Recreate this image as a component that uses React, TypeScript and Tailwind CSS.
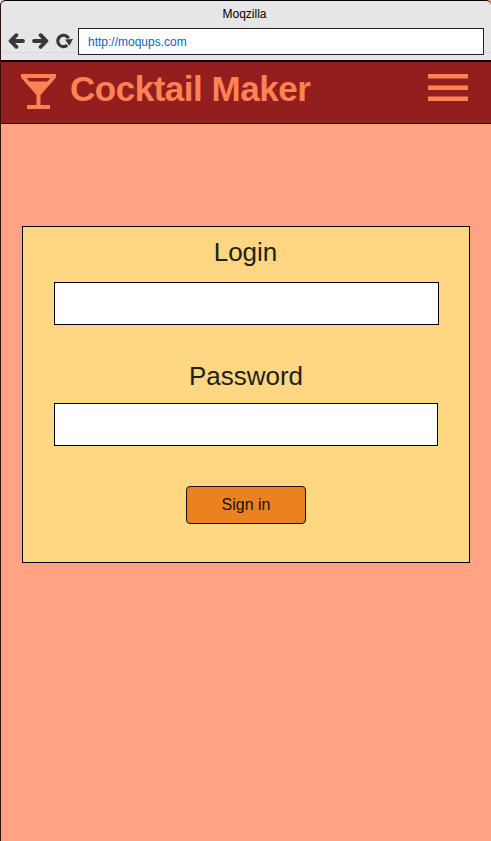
function ArrowLeft() {
  return (
    <svg className="block h-4 w-[17px]" viewBox="0 0 17 16" fill="none" stroke="#383838" strokeWidth="3.8">
      <path d="M8.4 2.2L2.6 8L8.4 13.8M3 8H15" strokeLinejoin="round" strokeLinecap="round" />
    </svg>
  );
}

function ArrowRight() {
  return (
    <svg className="block h-4 w-[17px]" viewBox="0 0 17 16" fill="none" stroke="#383838" strokeWidth="3.8">
      <path d="M8.6 2.2L14.4 8L8.6 13.8M14 8H2" strokeLinejoin="round" strokeLinecap="round" />
    </svg>
  );
}

function Reload() {
  return (
    <svg className="block h-4 w-[17px]" viewBox="0 0 17 16">
      <path d="M11.3 12.2A5.7 5.7 0 1 1 12.6 5.4" fill="none" stroke="#383838" strokeWidth="3.1" />
      <path d="M9 6.6L17 6L13.4 12.8Z" fill="#383838" />
    </svg>
  );
}

function Martini() {
  return (
    <svg className="block h-[35px] w-[35px]" viewBox="0 0 35 35" fill="#ff8254">
      <path fillRule="evenodd" d="M0 0H35V3.4L19.5 21V31H29V35H6V31H15.5V21L0 3.4ZM5.5 4L8.5 7.6H26.5L29.5 4Z" />
    </svg>
  );
}

function Hamburger() {
  return (
    <svg className="block h-[27px] w-10" viewBox="0 0 40 27" fill="#ff8254">
      <path d="M0 0H40V4.6H0ZM0 11.4H40V16H0ZM0 22.4H40V27H0Z" />
    </svg>
  );
}

function BrowserBar() {
  return (
    <div className="h-[62px] rounded-t-[5px] border-b-2 border-t border-black bg-[#e6e6e6]">
      <div className="h-[27px] pr-[3px] text-center text-xs leading-[26px] text-black">Moqzilla</div>
      <div className="flex h-[27px] items-start bg-[linear-gradient(#d8d8d8,#d8d8d8)] bg-[length:100%_1px] bg-[position:0_24px] bg-no-repeat pl-[7px] pr-[7px]">
        <div className="flex w-[70px] gap-[7px] pt-[5px]">
          <ArrowLeft />
          <ArrowRight />
          <Reload />
        </div>
        <div className="h-[27px] flex-1 border border-[#222] bg-white pl-[9px] text-xs leading-[26px] text-[#1762b8]">
          http://moqups.com
        </div>
      </div>
    </div>
  );
}

export default function App() {
  return (
    <div className="h-[841px] w-[491px] overflow-hidden rounded-tl-[5px] border-l border-[#30100c] bg-[#ffa384] font-['Liberation_Sans',Arial,sans-serif]">
      <BrowserBar />
      <header className="flex h-[62px] items-start justify-between border-b border-[#220505] bg-[#921e1e] pl-5 pr-[23px] pt-3">
        <div className="flex gap-[14px]">
          <Martini />
          <h1 className="mt-[-5px] whitespace-nowrap text-[35px] font-bold leading-10 tracking-[-0.48px] text-[#ff8254]">Cocktail Maker</h1>
        </div>
        <Hamburger />
      </header>
      <form className="ml-[21px] mt-[102px] flex h-[337px] w-[448px] flex-col border border-black bg-[#ffd782] pl-[31px]">
        <label htmlFor="login" className="mt-[10px] h-[45px] w-[383px] text-center text-[26px] leading-[30px] text-[#221f1a]">Login</label>
        <input id="login" className="h-[43px] w-[385px] border border-black bg-white px-3 outline-none" />
        <label htmlFor="password" className="mt-[36px] h-[42px] w-[384px] text-center text-[26px] leading-[30px] text-[#221f1a]">Password</label>
        <input id="password" type="password" className="h-[43px] w-[384px] border border-black bg-white px-3 outline-none" />
        <button type="button" className="ml-[132px] mt-10 h-[38px] w-[120px] rounded-[4px] border border-[#1c0e02] bg-[#ea821f] text-base text-[#1c1008]">
          Sign in
        </button>
      </form>
    </div>
  );
}
